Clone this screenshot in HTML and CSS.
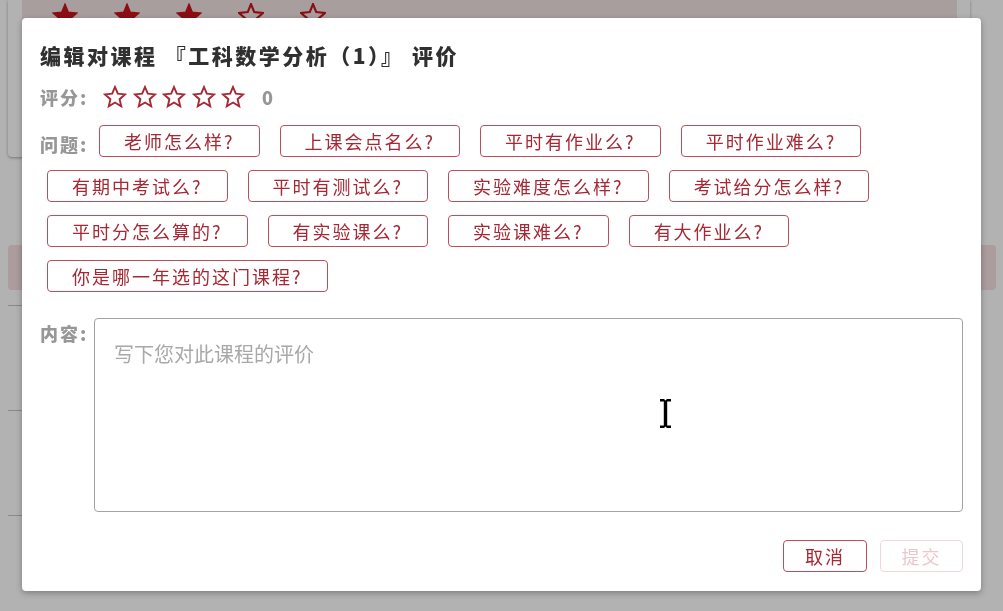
FILE: index.html
```html
<!DOCTYPE html>
<html lang="zh-CN">
<head>
    <meta charset="UTF-8">
    <meta name="viewport" content="width=device-width, initial-scale=1.0">
    <title>编辑课程评价</title>
    <link rel="stylesheet" href="styles.css">
</head>
<body>
    <div class="page">
        <div class="course-card">
            <div class="course-head">
                <svg class="bg-star" viewBox="0 0 24 24"><polygon points="12,1 15,8.4 23,9.2 17,14.5 18.8,22.5 12,18.4 5.2,22.5 7,14.5 1,9.2 9,8.4"/></svg>
                <svg class="bg-star" viewBox="0 0 24 24"><polygon points="12,1 15,8.4 23,9.2 17,14.5 18.8,22.5 12,18.4 5.2,22.5 7,14.5 1,9.2 9,8.4"/></svg>
                <svg class="bg-star" viewBox="0 0 24 24"><polygon points="12,1 15,8.4 23,9.2 17,14.5 18.8,22.5 12,18.4 5.2,22.5 7,14.5 1,9.2 9,8.4"/></svg>
                <svg class="bg-star empty" viewBox="0 0 24 24"><polygon points="12,1 15,8.4 23,9.2 17,14.5 18.8,22.5 12,18.4 5.2,22.5 7,14.5 1,9.2 9,8.4"/></svg>
                <svg class="bg-star empty" viewBox="0 0 24 24"><polygon points="12,1 15,8.4 23,9.2 17,14.5 18.8,22.5 12,18.4 5.2,22.5 7,14.5 1,9.2 9,8.4"/></svg>
            </div>
        </div>
        <div class="tab-bar"></div>
        <div class="rows">
            <div class="row"></div>
            <div class="row"></div>
            <div class="row"></div>
        </div>
    </div>

    <div class="mask"></div>

    <div class="dialog">
        <h2 class="dialog-title">编辑对课程 『工科数学分析（1）』 评价</h2>

        <div class="field rating">
            <span class="field-label">评分:</span>
            <div class="stars">
                <svg class="star" viewBox="0 0 24 24"><polygon points="12,2 14.8,8.7 22,9.4 16.6,14.2 18.2,21.3 12,17.5 5.8,21.3 7.4,14.2 2,9.4 9.2,8.7"/></svg>
                <svg class="star" viewBox="0 0 24 24"><polygon points="12,2 14.8,8.7 22,9.4 16.6,14.2 18.2,21.3 12,17.5 5.8,21.3 7.4,14.2 2,9.4 9.2,8.7"/></svg>
                <svg class="star" viewBox="0 0 24 24"><polygon points="12,2 14.8,8.7 22,9.4 16.6,14.2 18.2,21.3 12,17.5 5.8,21.3 7.4,14.2 2,9.4 9.2,8.7"/></svg>
                <svg class="star" viewBox="0 0 24 24"><polygon points="12,2 14.8,8.7 22,9.4 16.6,14.2 18.2,21.3 12,17.5 5.8,21.3 7.4,14.2 2,9.4 9.2,8.7"/></svg>
                <svg class="star" viewBox="0 0 24 24"><polygon points="12,2 14.8,8.7 22,9.4 16.6,14.2 18.2,21.3 12,17.5 5.8,21.3 7.4,14.2 2,9.4 9.2,8.7"/></svg>
            </div>
            <span class="score">0</span>
        </div>

        <div class="tags">
            <span class="field-label tags-label">问题:</span>
            <button class="tag">老师怎么样?</button>
            <button class="tag">上课会点名么?</button>
            <button class="tag">平时有作业么?</button>
            <button class="tag">平时作业难么?</button>
            <button class="tag">有期中考试么?</button>
            <button class="tag">平时有测试么?</button>
            <button class="tag">实验难度怎么样?</button>
            <button class="tag">考试给分怎么样?</button>
            <button class="tag">平时分怎么算的?</button>
            <button class="tag">有实验课么?</button>
            <button class="tag">实验课难么?</button>
            <button class="tag">有大作业么?</button>
            <button class="tag">你是哪一年选的这门课程?</button>
        </div>

        <div class="field content">
            <span class="field-label">内容:</span>
            <textarea class="content-input" placeholder="写下您对此课程的评价"></textarea>
        </div>

        <div class="dialog-footer">
            <button class="btn">取消</button>
            <button class="btn disabled">提交</button>
        </div>

        <svg class="cursor" viewBox="0 0 13 31"><path d="M1 1h4l1.5 1.5L8 1h4v2.6H8.2v23.8H12V30H8l-1.5-1.5L5 30H1v-2.6h3.8V3.6H1z"/></svg>
    </div>
</body>
</html>
```

FILE: styles.css
```css
:root {
    --brand-red: #a52834;
    --brand-border: #b9505b;
    --label-gray: #979797;
}

body {
    margin: 0;
    background: #ffffff;
    font-family: "Noto Sans CJK SC", "Noto Sans", sans-serif;
    overflow: hidden;
}

/* page behind the dialog */

.page {
    padding: 0 33px 0 8px;
}

.course-card {
    height: 157px;
    box-sizing: border-box;
    padding: 0 13px 0 14px;
    background: #ffffff;
    border-radius: 0 0 4px 4px;
    box-shadow: 0 1px 3px rgba(0, 0, 0, 0.35);
}

.course-head {
    display: flex;
    gap: 36px;
    height: 48px;
    box-sizing: border-box;
    padding: 3px 0 0 30px;
    background: #f1e2e2;
}

.bg-star {
    width: 26px;
    height: 26px;
    fill: #c7151d;
    stroke: #c7151d;
    stroke-width: 1.2;
}

.bg-star.empty {
    fill: none;
    stroke-width: 2;
}

.tab-bar {
    height: 45px;
    margin: 88px -26px 0 0;
    background: #f6e0e3;
    border-radius: 4px;
}

.rows {
    margin-top: 15px;
}

.row {
    height: 104px;
    border-top: 1px solid #c4c4c4;
}

.mask {
    position: fixed;
    top: 0;
    left: 0;
    right: 0;
    bottom: 0;
    background: rgba(0, 0, 0, 0.3);
}

/* dialog */

.dialog {
    position: fixed;
    top: 18px;
    left: 22px;
    width: 959px;
    height: 573px;
    box-sizing: border-box;
    padding: 22px 18px 0;
    background: #ffffff;
    border-radius: 4px;
    box-shadow: 0 2px 6px rgba(0, 0, 0, 0.3);
}

.dialog-title {
    margin: 0;
    font-size: 21px;
    line-height: 30px;
    font-weight: 900;
    color: #303030;
    letter-spacing: 2.5px;
}

.field {
    display: flex;
    align-items: flex-start;
}

.field-label {
    flex: none;
    width: 52px;
    font-size: 18px;
    line-height: 30px;
    font-weight: 900;
    color: var(--label-gray);
    letter-spacing: 2px;
}

.rating {
    margin-top: 12px;
    align-items: center;
}

.stars {
    display: flex;
    gap: 5.5px;
    margin-left: 11px;
}

.star {
    width: 24px;
    height: 24px;
    fill: none;
    stroke: var(--brand-red);
    stroke-width: 1.9;
    stroke-linejoin: miter;
}

.score {
    margin-left: 17px;
    font-size: 18px;
    font-weight: 900;
    color: var(--label-gray);
}

.tags {
    display: flex;
    flex-wrap: wrap;
    margin-top: 13px;
}

.tags-label {
    height: 32px;
    padding-top: 4px;
    box-sizing: border-box;
}

.tag {
    height: 32px;
    box-sizing: border-box;
    margin: 0 13px 13px 7px;
    padding: 0 24px;
    background: #ffffff;
    border: 1px solid var(--brand-border);
    border-radius: 4px;
    font-family: inherit;
    font-size: 18px;
    line-height: 30px;
    letter-spacing: 2px;
    color: var(--brand-red);
    cursor: pointer;
}

.content {
    margin-top: 13px;
}

.content-input {
    flex: 1;
    height: 194px;
    box-sizing: border-box;
    margin-left: 2px;
    padding: 21px 19px;
    border: 1px solid #a3a3a3;
    border-radius: 4px;
    font-family: inherit;
    font-size: 20px;
    line-height: 28px;
    color: #333333;
    resize: none;
    outline: none;
}

.content-input::placeholder {
    color: #a8a8a8;
}

.dialog-footer {
    display: flex;
    justify-content: flex-end;
    gap: 13px;
    margin-top: 28px;
}

.btn {
    width: 84px;
    height: 32px;
    box-sizing: border-box;
    padding: 0;
    background: #ffffff;
    border: 1px solid var(--brand-border);
    border-radius: 4px;
    font-family: inherit;
    font-size: 18px;
    line-height: 30px;
    letter-spacing: 2px;
    color: var(--brand-red);
    cursor: pointer;
}

.btn.disabled {
    width: 83px;
    border-color: #f3d6da;
    color: #ecc6cb;
    cursor: default;
}

.cursor {
    position: absolute;
    left: 637px;
    top: 380px;
    width: 13px;
    height: 31px;
    fill: #000000;
}
```
